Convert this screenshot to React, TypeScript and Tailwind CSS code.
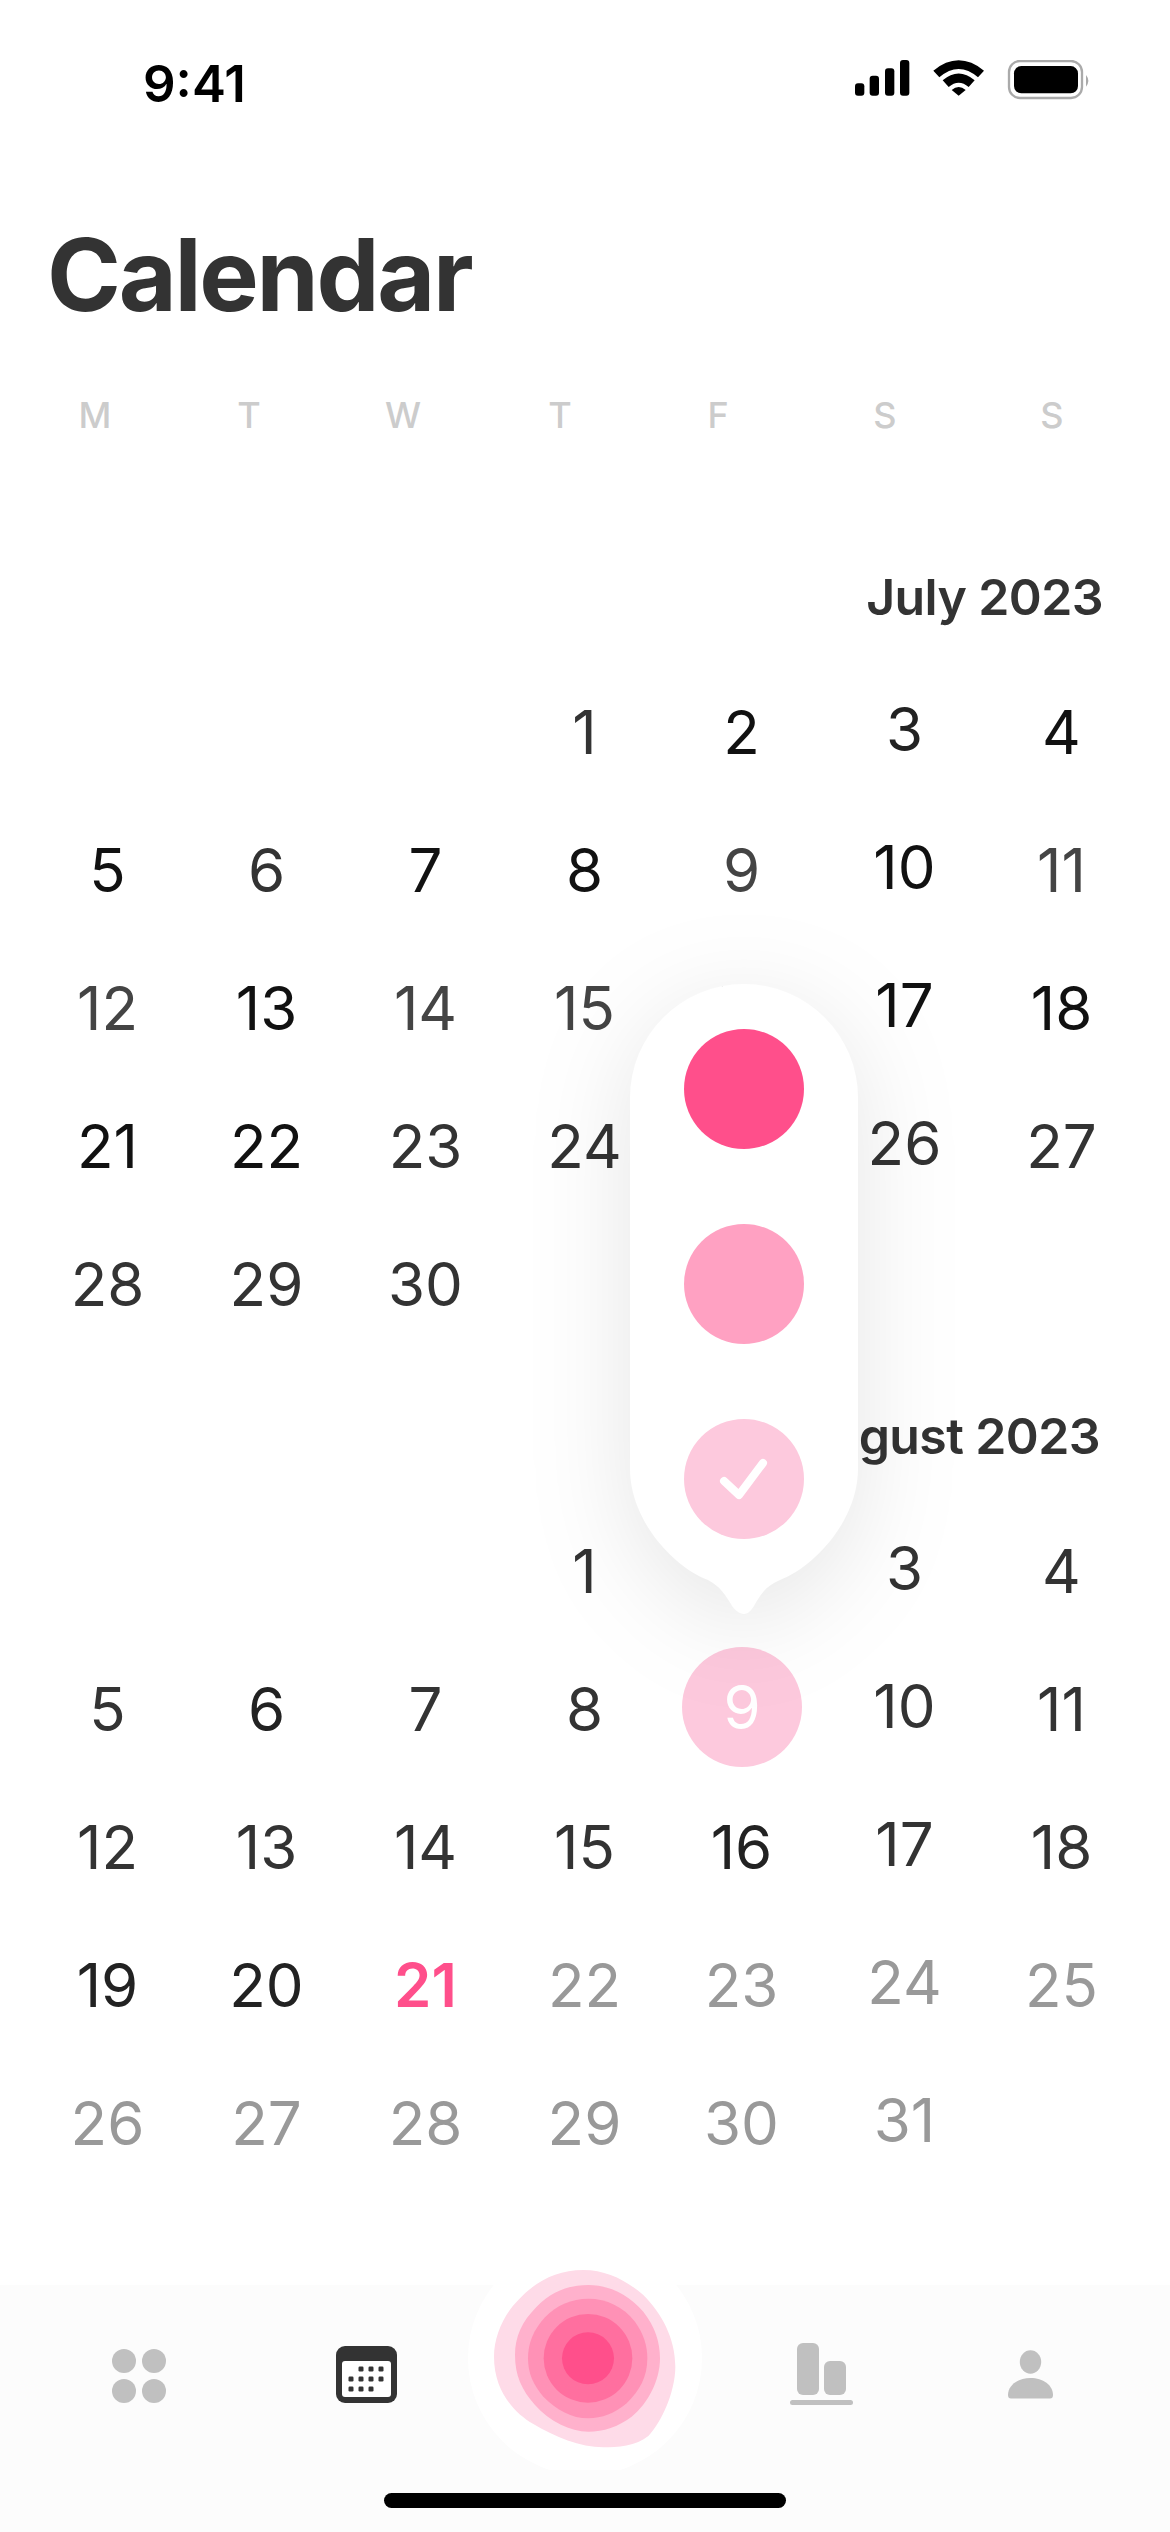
import React from "react";

type Cell = { d?: number; c?: string };

const K = "text-[#111111]";
const E = "text-[#222222]";
const D = "text-[#333333]";
const M = "text-[#444444]";
const G = "text-[#999999]";
const P = "text-[#ff4f8b] font-semibold";

const july: Cell[] = [
  {}, {}, {}, { d: 1, c: D }, { d: 2, c: K }, { d: 3, c: E }, { d: 4, c: K },
  { d: 5, c: K }, { d: 6, c: D }, { d: 7, c: K }, { d: 8, c: K }, { d: 9, c: M }, { d: 10, c: K }, { d: 11, c: M },
  { d: 12, c: M }, { d: 13, c: K }, { d: 14, c: M }, { d: 15, c: M }, { d: 16, c: D }, { d: 17, c: K }, { d: 18, c: K },
  { d: 21, c: K }, { d: 22, c: K }, { d: 23, c: D }, { d: 24, c: D }, { d: 25, c: D }, { d: 26, c: D }, { d: 27, c: D },
  { d: 28, c: D }, { d: 29, c: D }, { d: 30, c: D }, {}, {}, {}, {},
];

const august: Cell[] = [
  {}, {}, {}, { d: 1, c: D }, { d: 2, c: D }, { d: 3, c: D }, { d: 4, c: D },
  { d: 5, c: D }, { d: 6, c: E }, { d: 7, c: D }, { d: 8, c: D }, { d: 9, c: "selected" }, { d: 10, c: D }, { d: 11, c: D },
  { d: 12, c: D }, { d: 13, c: D }, { d: 14, c: D }, { d: 15, c: D }, { d: 16, c: E }, { d: 17, c: D }, { d: 18, c: D },
  { d: 19, c: E }, { d: 20, c: E }, { d: 21, c: P }, { d: 22, c: G }, { d: 23, c: G }, { d: 24, c: G }, { d: 25, c: G },
  { d: 26, c: G }, { d: 27, c: G }, { d: 28, c: G }, { d: 29, c: G }, { d: 30, c: G }, { d: 31, c: G }, {},
];

function MonthGrid({ cells }: { cells: Cell[] }) {
  return (
    <div className="grid grid-cols-[repeat(7,159px)] auto-rows-[138px] pl-[28px] text-[60px] leading-none">
      {cells.map((cell, i) => {
        const sat = i % 7 === 5;
        return (
          <div
            key={i}
            className={`flex items-center justify-center ${sat ? "pl-[4px] pb-[6px]" : ""} ${i % 7 === 4 ? "pr-[4px]" : ""}`}
          >
            {cell.c === "selected" ? (
              <span className="mb-[5px] ml-[1px] flex h-[120px] w-[120px] shrink-0 items-center justify-center rounded-full bg-[#fdc9dd] text-white">
                {cell.d}
              </span>
            ) : (
              <span className={cell.c}>{cell.d}</span>
            )}
          </div>
        );
      })}
    </div>
  );
}

function StatusIcons() {
  return (
    <svg width="240" height="46" viewBox="0 0 720 138" className="block">
      <g transform="translate(-103 -60)">
        <rect x="103" y="130" width="28" height="37" rx="9" fill="#000" />
        <rect x="147" y="107" width="28" height="60" rx="9" fill="#000" />
        <rect x="193" y="85" width="28" height="82" rx="9" fill="#000" />
        <rect x="238" y="60" width="28" height="107" rx="9" fill="#000" />
        <path d="M338 92 Q414 30 490 92 L472 112 Q414 62 356 112 Z" fill="#000" />
        <path d="M366 121 Q414 80 462 121 L444 141 Q414 115 384 141 Z" fill="#000" />
        <path d="M393 150 Q414 132 435 150 L414 167 Z" fill="#000" />
        <rect x="565" y="63" width="219" height="111" rx="33" fill="none" stroke="#aaaaaa" strokeWidth="7" />
        <rect x="580" y="78" width="192" height="82" rx="22" fill="#000" />
        <path d="M796 105 Q810 122 796 140 Z" fill="#aaaaaa" />
      </g>
    </svg>
  );
}

function Popover() {
  return (
    <div className="absolute left-[630px] top-[984px] h-[630px] w-[228px]">
      <svg
        width="228"
        height="630"
        viewBox="0 0 228 630"
        className="absolute inset-0 overflow-visible drop-shadow-[0_20px_50px_rgba(0,0,0,0.10)]"
      >
        <path
          d="M0 114 A114 114 0 0 1 228 114 V484 C228 540 180 585 150 596 C135 602 130 612 125 620 C122 626 118 630 114 630 C110 630 104 626 101 620 C96 612 90 602 78 596 C48 585 0 540 0 484 Z"
          fill="#ffffff"
        />
      </svg>
      <div className="relative flex flex-col items-center gap-[75px] pt-[45px]">
        <div className="h-[120px] w-[120px] rounded-full bg-[#ff4f8b]" />
        <div className="h-[120px] w-[120px] rounded-full bg-[#ffa1c2]" />
        <div className="h-[120px] w-[120px] rounded-full bg-[#fdc9dd]">
          <svg width="120" height="120" viewBox="0 0 120 120" fill="none">
            <path d="M40 62 L55 76 L79 44" stroke="#ffffff" strokeWidth="8" strokeLinecap="round" strokeLinejoin="round" />
          </svg>
        </div>
      </div>
    </div>
  );
}

function Blob() {
  return (
    <svg
      width="300"
      height="230"
      viewBox="0 0 900 690"
      className="absolute left-[440px] top-[-45px]"
    >
      <circle cx="435" cy="355" r="351" fill="#ffffff" />
      <path
        d="M430 90 C500 90 560 122 610 165 C665 220 706 295 706 380 C706 455 665 545 625 588 C590 618 530 622 490 622 C420 622 345 590 280 552 C220 518 162 450 162 350 C162 290 190 225 235 180 C285 125 350 90 430 90 Z"
        fill="#fedbe8"
      />
      <path
        d="M445 135 C510 135 565 165 610 215 C645 260 660 305 660 355 C660 420 625 490 575 530 C535 560 490 575 445 575 C390 575 330 545 285 495 C245 450 225 405 225 345 C225 290 245 245 290 200 C335 155 385 135 445 135 Z"
        fill="#ffb1cc"
      />
      <path
        d="M445 176 C500 176 550 200 585 245 C610 280 622 315 622 355 C622 410 600 450 560 490 C525 520 485 535 445 535 C395 535 350 510 310 470 C280 435 264 400 264 355 C264 310 280 270 315 232 C350 195 395 176 445 176 Z"
        fill="#ff91b6"
      />
      <circle cx="444" cy="355" r="133" fill="#ff6f9f" />
      <circle cx="444" cy="355" r="78" fill="#ff4f8b" />
    </svg>
  );
}

function TabBar() {
  return (
    <div className="relative h-[247px] shrink-0 bg-[#fcfcfc]">
      <Blob />
      <div className="relative flex h-[208px] items-center pb-[31px] pl-[112px]">
        <svg width="55" height="55" viewBox="0 0 55 55" className="mt-[6px]">
          <circle cx="12" cy="12" r="12" fill="#c0c0c0" />
          <circle cx="42" cy="12" r="12" fill="#c0c0c0" />
          <circle cx="12" cy="42" r="12" fill="#c0c0c0" />
          <circle cx="42" cy="42" r="12" fill="#c0c0c0" />
        </svg>
        <svg width="61" height="57" viewBox="0 0 61 57" className="ml-[169px] mt-[2px]">
          <rect width="61" height="57" rx="9" fill="#333333" />
          <rect x="6" y="15" width="49" height="36" rx="3" fill="#ffffff" />
          {[
            [25, 23], [35, 23], [45, 23],
            [15, 33], [25, 33], [35, 33], [45, 33],
            [15, 43], [25, 43], [35, 43],
          ].map(([x, y]) => (
            <rect key={`${x}-${y}`} x={x - 2.5} y={y - 2.5} width="5" height="5" rx="1.2" fill="#333333" />
          ))}
        </svg>
        <svg width="63" height="62" viewBox="0 0 63 62" className="ml-[393px]">
          <rect x="7" y="0" width="22" height="52" rx="6" fill="#c0c0c0" />
          <rect x="34" y="18" width="22" height="34" rx="6" fill="#c0c0c0" />
          <rect x="0" y="57" width="63" height="5" rx="2.5" fill="#c0c0c0" />
        </svg>
        <svg width="45" height="49" viewBox="0 0 45 49" className="ml-[155px] mt-[2px]">
          <ellipse cx="22.5" cy="12" rx="10.7" ry="11.7" fill="#c0c0c0" />
          <path d="M0 45 C0 35 10 28 22.5 28 C35 28 45 35 45 45 C45 47.5 44 48.5 42 48.5 L3 48.5 C1 48.5 0 47.5 0 45 Z" fill="#c0c0c0" />
        </svg>
      </div>
      <div className="relative ml-[384px] h-[15px] w-[402px] rounded-full bg-black" />
    </div>
  );
}

export default function App() {
  const weekdays: [string, string][] = [
    ["M", "w-[154px]"],
    ["T", "w-[154px]"],
    ["W", "w-[154px]"],
    ["T", "w-[160px]"],
    ["F", "w-[156px]"],
    ["S", "w-[178px]"],
    ["S", "w-[156px]"],
  ];
  return (
    <div className="relative flex h-[2532px] w-[1170px] flex-col overflow-hidden bg-white font-['Inter',sans-serif]">
      <div className="flex h-[170px] items-start justify-between pl-[143px] pr-[75px] pt-[56px]">
        <span className="text-[51px] font-semibold leading-[56px] text-black">9:41</span>
        <div className="pt-[4px]">
          <StatusIcons />
        </div>
      </div>
      <div className="flex h-[210px] items-center pl-[47px]">
        <h1 className="text-[100px] font-bold leading-none tracking-[-2.3px] text-[#333333]">Calendar</h1>
      </div>
      <div className="flex h-[70px] items-center pl-[18px] text-[36px] font-medium text-[#cccccc]">
        {weekdays.map(([l, w], i) => (
          <span key={i} className={`${w} text-center leading-none`}>
            {l}
          </span>
        ))}
      </div>
      <div className="mt-[117px] flex h-[60px] items-center justify-end pr-[67px] text-[50px] font-semibold tracking-[-0.6px] text-[#333333]">
        July 2023
      </div>
      <div className="mt-[36px]">
        <MonthGrid cells={july} />
      </div>
      <div className="mt-[53px] flex h-[60px] items-center justify-end pr-[70px] text-[50px] font-semibold tracking-[-0.6px] text-[#333333]">
        August 2023
      </div>
      <div className="mt-[36px]">
        <MonthGrid cells={august} />
      </div>
      <div className="flex-1" />
      <TabBar />
      <Popover />
    </div>
  );
}
